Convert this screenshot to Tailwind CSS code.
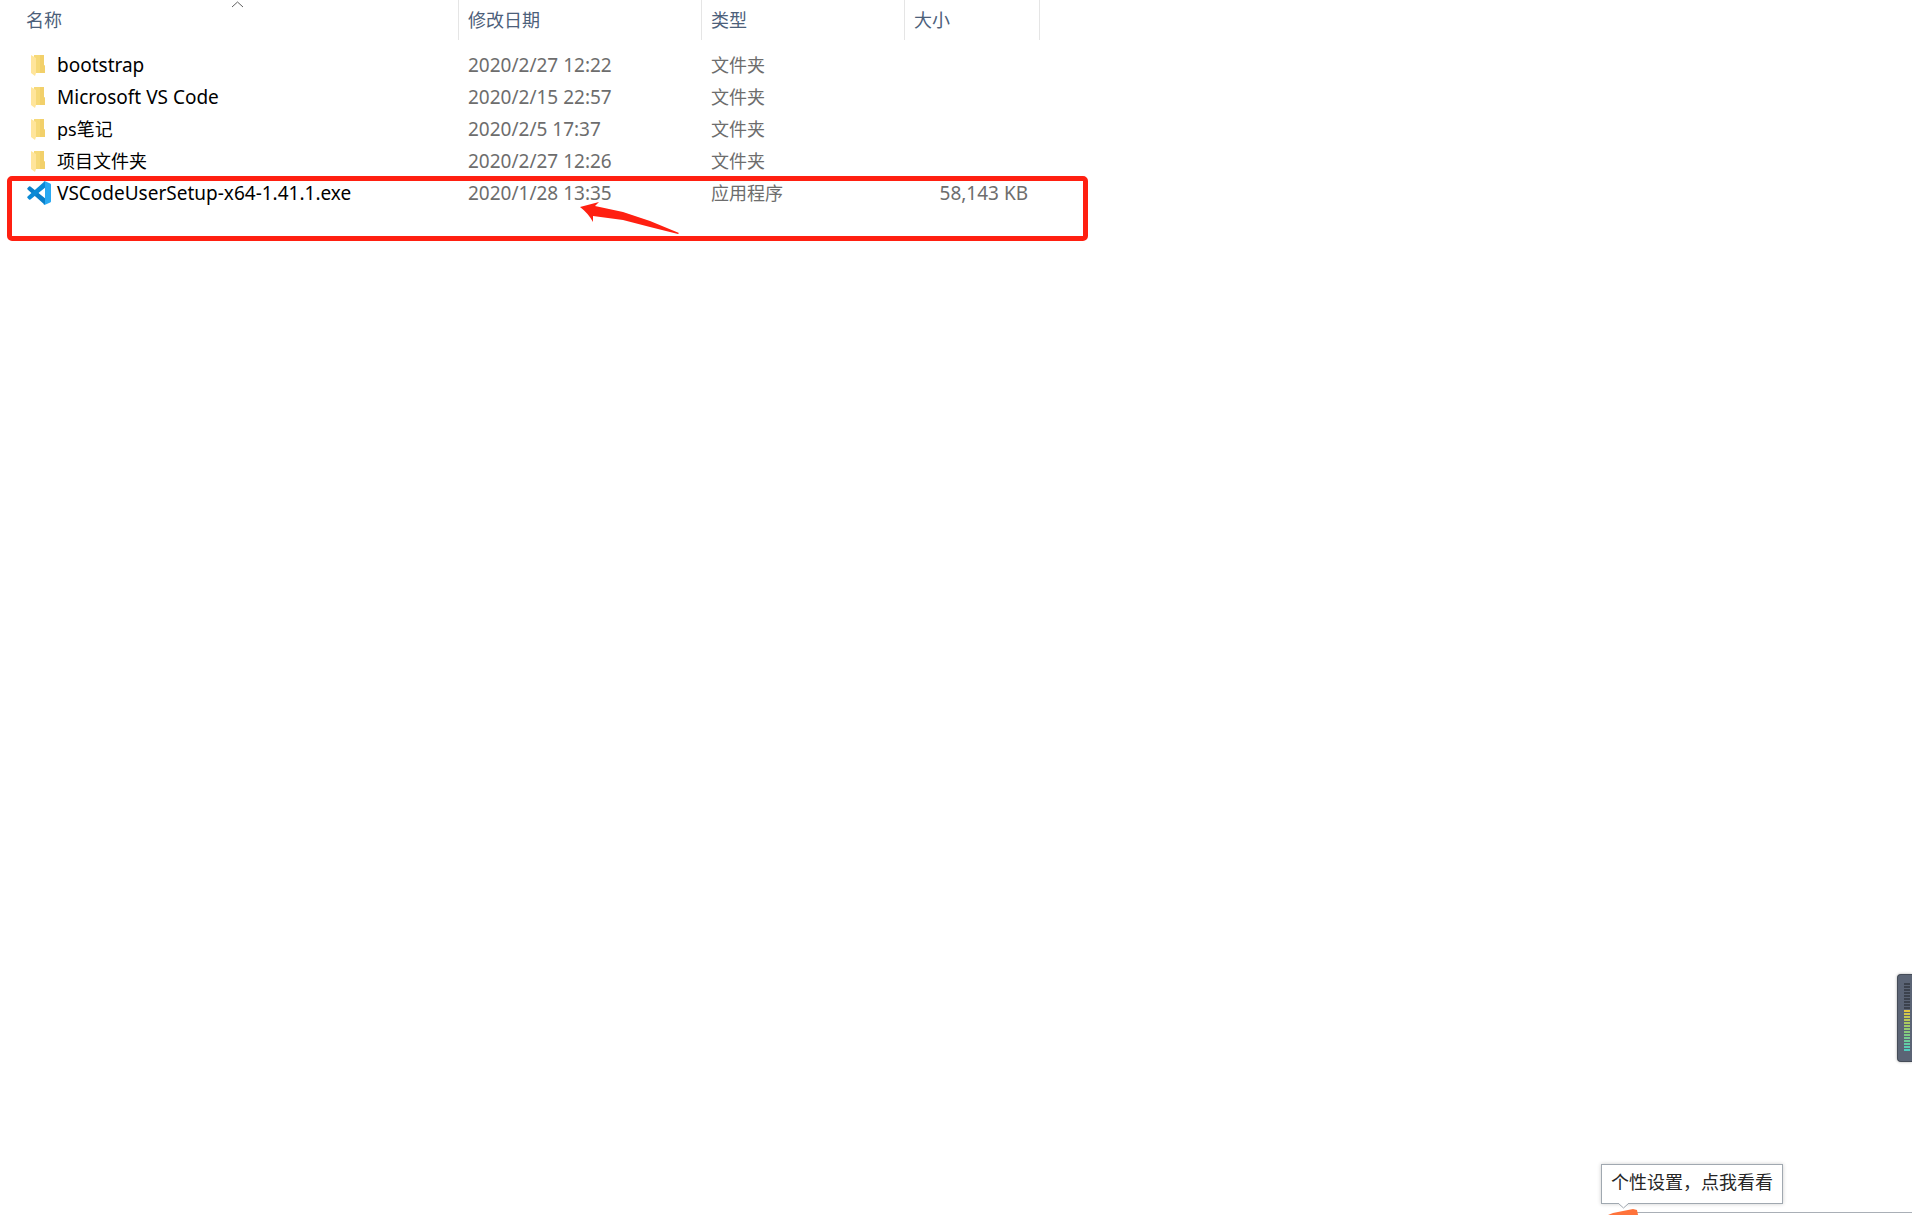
<!DOCTYPE html>
<html lang="zh-CN">
  <head>
    <meta charset="UTF-8" />
    <meta name="viewport" content="width=device-width, initial-scale=1.0" />
    <title>文件夹</title>
    <script src="https://cdn.jsdelivr.net/npm/@tailwindcss/browser@4"></script>
  </head>
  <body
    class="relative h-screen overflow-hidden bg-white font-['Noto_Sans','Noto_Sans_CJK_SC',sans-serif] text-[18px] text-[#6d6d6d]"
  >
    <!-- icons shared by the rows -->
    <svg class="hidden">
      <symbol id="folder" viewBox="0 -1 14 22">
        <path d="M3 0h10v10l1 1v7H3z" fill="#f6d978" />
        <path d="M9 0h4v10l1 1v7H9z" fill="#f2d06a" />
        <path d="M0 0l5 3v15l-1 3-4-3z" fill="#ffe59b" />
      </symbol>
      <symbol id="vscode" viewBox="0 0 24 24">
        <path d="M.3 7.300Q0 8 .8 8.700L18 24V17.200L3.400 5.500Q2.600 5 2 5.500z" fill="#0a7fc9" />
        <path d="M.3 16.700Q0 16 .8 15.300L18 0v6.800L3.400 18.500Q2.600 19 2 18.500z" fill="#0a8ad6" />
        <path d="M17.500 0L23.200 2.500Q24 2.900 24 3.800v16.400q0 .9-.8 1.300L17.500 24c-.6 0-1-.4-1.300-.7.8.4 1.800-.1 1.800-1V1.700c0-.9-1-1.400-1.800-1 .3-.4.7-.7 1.300-.7z" fill="#29a9f2" />
      </symbol>
    </svg>

    <main class="relative">
      <table class="w-[1040px] table-fixed border-separate border-spacing-0 text-left">
        <colgroup>
          <col class="w-[459px]" />
          <col class="w-[243px]" />
          <col class="w-[203px]" />
          <col class="w-[135px]" />
        </colgroup>
        <thead class="text-[#4c607a]">
          <tr class="h-10">
            <th class="relative border-r border-[#e5e5e5] p-0 pl-[26px] font-normal">
              <button type="button" class="block leading-8">名称</button>
              <svg class="absolute top-px left-[231px]" width="13" height="7" fill="none" stroke="#5f5f5f">
                <path d="M1 6l5.500-5L12 6" />
              </svg>
            </th>
            <th class="border-r border-[#e5e5e5] p-0 pl-[9px] font-normal">
              <button type="button" class="block leading-8">修改日期</button>
            </th>
            <th class="border-r border-[#e5e5e5] p-0 pl-[9px] font-normal">
              <button type="button" class="block leading-8">类型</button>
            </th>
            <th class="border-r border-[#e5e5e5] p-0 pl-[9px] font-normal">
              <button type="button" class="block leading-8">大小</button>
            </th>
          </tr>
        </thead>
        <tbody class="before:block before:h-[9px]">
          <tr class="h-8">
            <td class="p-0 pl-[27px]">
              <a href="#" class="flex items-center gap-1 text-[19px] leading-8 text-black">
                <svg class="h-[22px] w-[22px]"><use href="#folder" /></svg>
                <span class="pl-1">bootstrap</span>
              </a>
            </td>
            <td class="p-0 pl-[9px] text-[19px] leading-8">2020/2/27 12:22</td>
            <td class="p-0 pl-[9px]">文件夹</td>
            <td></td>
          </tr>
          <tr class="h-8">
            <td class="p-0 pl-[27px]">
              <a href="#" class="flex items-center gap-1 text-[19px] leading-8 text-black">
                <svg class="h-[22px] w-[22px]"><use href="#folder" /></svg>
                <span class="pl-1">Microsoft VS Code</span>
              </a>
            </td>
            <td class="p-0 pl-[9px] text-[19px] leading-8">2020/2/15 22:57</td>
            <td class="p-0 pl-[9px]">文件夹</td>
            <td></td>
          </tr>
          <tr class="h-8">
            <td class="p-0 pl-[27px]">
              <a href="#" class="flex items-center gap-1 leading-8 text-black">
                <svg class="h-[22px] w-[22px]"><use href="#folder" /></svg>
                <span class="pl-1">ps笔记</span>
              </a>
            </td>
            <td class="p-0 pl-[9px] text-[19px] leading-8">2020/2/5 17:37</td>
            <td class="p-0 pl-[9px]">文件夹</td>
            <td></td>
          </tr>
          <tr class="h-8">
            <td class="p-0 pl-[27px]">
              <a href="#" class="flex items-center gap-1 leading-8 text-black">
                <svg class="h-[22px] w-[22px]"><use href="#folder" /></svg>
                <span class="pl-1">项目文件夹</span>
              </a>
            </td>
            <td class="p-0 pl-[9px] text-[19px] leading-8">2020/2/27 12:26</td>
            <td class="p-0 pl-[9px]">文件夹</td>
            <td></td>
          </tr>
          <tr class="h-8">
            <td class="p-0 pl-[27px]">
              <a href="#" class="flex items-center gap-1 text-[19px] leading-8 text-black">
                <svg class="h-6 w-6"><use href="#vscode" /></svg>
                <span class="pl-[2px]">VSCodeUserSetup-x64-1.41.1.exe</span>
              </a>
            </td>
            <td class="p-0 pl-[9px] text-[19px] leading-8">2020/1/28 13:35</td>
            <td class="p-0 pl-[9px]">应用程序</td>
            <td class="p-0 pr-3 text-right text-[19px] leading-8">58,143 KB</td>
          </tr>
        </tbody>
      </table>

      <!-- red marker around the installer -->
      <div class="pointer-events-none absolute top-[176px] left-[7px] h-[65px] w-[1081px] rounded-[5px] border-5 border-[#ff2011]"></div>
      <svg class="pointer-events-none absolute top-[201px] left-[579px]" width="101" height="34" fill="#ff2011">
        <path d="M1 6L20 1 16 5 44 11 71 20 100 32 99 33 71 26 44 19 14 15 14 21Q9 12 1 6z" />
      </svg>
    </main>

    <!-- level meter docked to the right edge -->
    <aside class="absolute right-0 bottom-[153px] flex h-[88px] w-[15px] flex-col items-end gap-px rounded-l-[4px] border border-r-0 border-[#454c58] bg-[#5b6475] pt-2 pr-[2px] shadow-[0_0_3px_#0005]">
      <i class="h-[2px] w-[6px] bg-[#3c424d]"></i>
      <i class="h-[2px] w-[6px] bg-[#3c424d]"></i>
      <i class="h-[2px] w-[6px] bg-[#3c424d]"></i>
      <i class="h-[2px] w-[6px] bg-[#3c424d]"></i>
      <i class="h-[2px] w-[6px] bg-[#3c424d]"></i>
      <i class="h-[2px] w-[6px] bg-[#3c424d]"></i>
      <i class="h-[2px] w-[6px] bg-[#3c424d]"></i>
      <i class="h-[2px] w-[6px] bg-[#3c424d]"></i>
      <i class="h-[2px] w-[6px] bg-[#3c424d]"></i>
      <i class="h-[2px] w-[6px] bg-[#e3c63f]"></i>
      <i class="h-[2px] w-[6px] bg-[#d4c74a]"></i>
      <i class="h-[2px] w-[6px] bg-[#c4c850]"></i>
      <i class="h-[2px] w-[6px] bg-[#b7c957]"></i>
      <i class="h-[2px] w-[6px] bg-[#abc95e]"></i>
      <i class="h-[2px] w-[6px] bg-[#a0ca67]"></i>
      <i class="h-[2px] w-[6px] bg-[#94ca70]"></i>
      <i class="h-[2px] w-[6px] bg-[#89cb7a]"></i>
      <i class="h-[2px] w-[6px] bg-[#7fcb84]"></i>
      <i class="h-[2px] w-[6px] bg-[#76cc8f]"></i>
      <i class="h-[2px] w-[6px] bg-[#6dcc9a]"></i>
      <i class="h-[2px] w-[6px] bg-[#63cca5]"></i>
      <i class="h-[2px] w-[6px] bg-[#5acdb1]"></i>
      <i class="h-[2px] w-[6px] bg-[#50cdbd]"></i>
    </aside>

    <!-- top of the input bar with its tooltip -->
    <div class="absolute right-0 bottom-[2px] w-[275px] border-t border-[#a9afb6]"></div>
    <svg class="absolute right-[274px] bottom-0" width="30" height="6">
      <path d="M0 6l5-2L25 0l4 1 1 5z" fill="#ff733b" />
    </svg>
    <div role="tooltip" class="absolute right-[129px] bottom-[11px] border border-[#a0a8b0] bg-white px-[9px] pb-1 leading-[34px] text-[#262626] shadow-[0_0_4px_#0003]">
      个性设置，点我看看
      <svg class="absolute top-full left-4" width="11" height="6">
        <path d="M0-1h11v1L5.500 5 0 0z" fill="#fff" />
        <path d="M0 0l5.500 5L11 0" fill="none" stroke="#a0a8b0" />
      </svg>
    </div>
  </body>
</html>
